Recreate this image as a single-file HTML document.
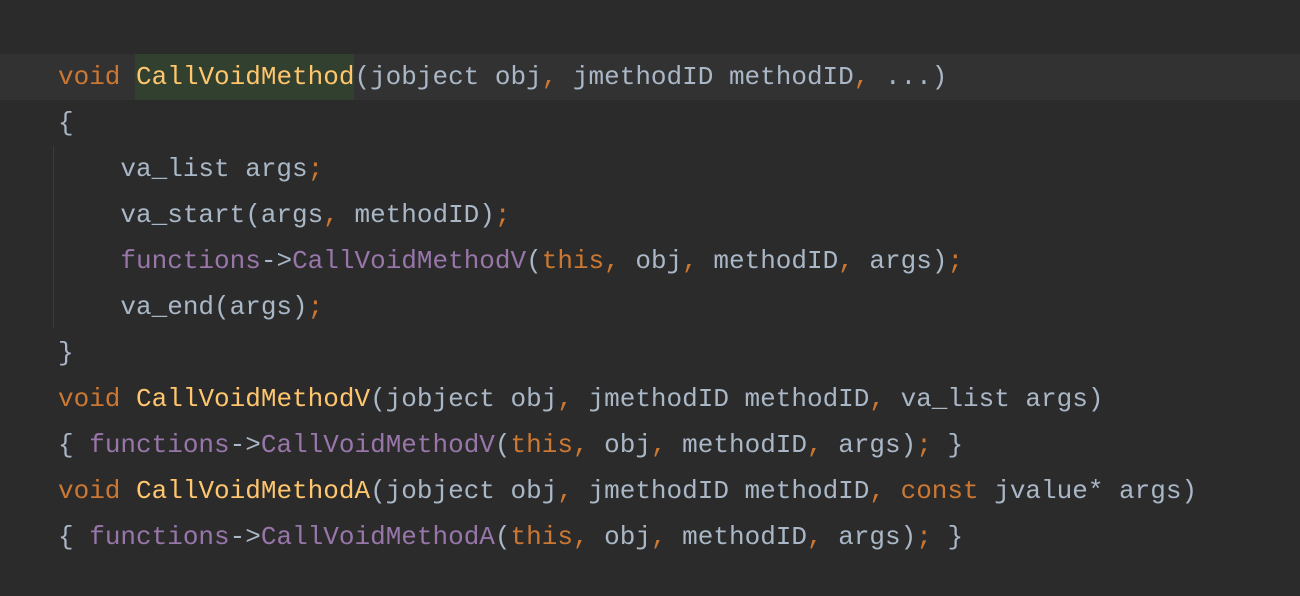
<!DOCTYPE html>
<html><head><style>
body{margin:0;width:1300px;height:596px;background:#2b2b2b;overflow:hidden;position:relative}
.cur{position:absolute;left:0;top:54px;width:1300px;height:46px;background:#323232}
.hl{position:absolute;left:135px;top:54px;width:219px;height:46px;background:#32402f}
.guide{position:absolute;left:53px;top:146px;width:1px;height:182px;background:#3b3b3b}
pre{position:absolute;left:58px;top:54px;margin:0;font-family:"Liberation Mono",monospace;font-size:26px;line-height:46px;color:#a9b7c6}
.k{color:#cc7832}.f{color:#ffc66d}.p{color:#9876aa}
</style></head><body>
<div class="cur"></div><div class="hl"></div><div class="guide"></div>
<pre><span class="k">void</span> <span class="f">CallVoidMethod</span>(jobject obj<span class="k">,</span> jmethodID methodID<span class="k">,</span> ...)
{
    va_list args<span class="k">;</span>
    va_start(args<span class="k">,</span> methodID)<span class="k">;</span>
    <span class="p">functions</span>-&gt;<span class="p">CallVoidMethodV</span>(<span class="k">this,</span> obj<span class="k">,</span> methodID<span class="k">,</span> args)<span class="k">;</span>
    va_end(args)<span class="k">;</span>
}
<span class="k">void</span> <span class="f">CallVoidMethodV</span>(jobject obj<span class="k">,</span> jmethodID methodID<span class="k">,</span> va_list args)
{ <span class="p">functions</span>-&gt;<span class="p">CallVoidMethodV</span>(<span class="k">this,</span> obj<span class="k">,</span> methodID<span class="k">,</span> args)<span class="k">;</span> }
<span class="k">void</span> <span class="f">CallVoidMethodA</span>(jobject obj<span class="k">,</span> jmethodID methodID<span class="k">,</span> <span class="k">const</span> jvalue* args)
{ <span class="p">functions</span>-&gt;<span class="p">CallVoidMethodA</span>(<span class="k">this,</span> obj<span class="k">,</span> methodID<span class="k">,</span> args)<span class="k">;</span> }</pre>
</body></html>
